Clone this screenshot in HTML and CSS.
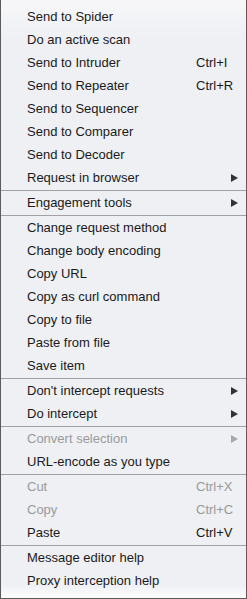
FILE: index.html
```html
<!DOCTYPE html>
<html lang="en">
<head>
    <meta charset="UTF-8">
    <title>Context menu</title>
    <link rel="stylesheet" href="styles.css">
</head>
<body>

<div class="menu">
    <div class="item"><span class="label">Send to Spider</span></div>
    <div class="item"><span class="label">Do an active scan</span></div>
    <div class="item"><span class="label">Send to Intruder</span><span class="key">Ctrl+I</span></div>
    <div class="item"><span class="label">Send to Repeater</span><span class="key">Ctrl+R</span></div>
    <div class="item"><span class="label">Send to Sequencer</span></div>
    <div class="item"><span class="label">Send to Comparer</span></div>
    <div class="item"><span class="label">Send to Decoder</span></div>
    <div class="item"><span class="label">Request in browser</span><span class="arrow"></span></div>
    <div class="sep"></div>
    <div class="item"><span class="label">Engagement tools</span><span class="arrow"></span></div>
    <div class="sep"></div>
    <div class="item"><span class="label">Change request method</span></div>
    <div class="item"><span class="label">Change body encoding</span></div>
    <div class="item"><span class="label">Copy URL</span></div>
    <div class="item"><span class="label">Copy as curl command</span></div>
    <div class="item"><span class="label">Copy to file</span></div>
    <div class="item"><span class="label">Paste from file</span></div>
    <div class="item"><span class="label">Save item</span></div>
    <div class="sep"></div>
    <div class="item"><span class="label">Don't intercept requests</span><span class="arrow"></span></div>
    <div class="item"><span class="label">Do intercept</span><span class="arrow"></span></div>
    <div class="sep"></div>
    <div class="item disabled"><span class="label">Convert selection</span><span class="arrow"></span></div>
    <div class="item"><span class="label">URL-encode as you type</span></div>
    <div class="sep"></div>
    <div class="item disabled"><span class="label">Cut</span><span class="key">Ctrl+X</span></div>
    <div class="item disabled"><span class="label">Copy</span><span class="key">Ctrl+C</span></div>
    <div class="item"><span class="label">Paste</span><span class="key">Ctrl+V</span></div>
    <div class="sep"></div>
    <div class="item"><span class="label">Message editor help</span></div>
    <div class="item"><span class="label">Proxy interception help</span></div>
</div>

</body>
</html>
```

FILE: styles.css
```css
body {
    margin: 0;
    padding: 0;
    background: #ffffff;
    font-family: "Liberation Sans", Arial, sans-serif;
}
.menu {
    box-sizing: border-box;
    width: 247px;
    height: 599px;
    padding-top: 5px;
    border: 1px solid #5b5b5b;
    border-top: none;
    background: linear-gradient(to bottom, #f7f7f9 0px, #eef0f4 40px, #eef0f4 585px, #fbfbfc 596px);
}
.item {
    display: flex;
    align-items: center;
    height: 23px;
    padding-left: 26px;
    padding-right: 8px;
    font-size: 13px;
    line-height: 23px;
    color: #1a1a1a;
}
.item .label {
    flex: 1;
    white-space: nowrap;
}
.item .key {
    width: 42px;
}
.item .arrow {
    width: 0;
    height: 0;
    border-top: 4px solid transparent;
    border-bottom: 4px solid transparent;
    border-left: 7px solid #333333;
}
.disabled {
    color: #9a9a9a;
}
.disabled .arrow {
    border-left-color: #a8a8a8;
}
.sep {
    height: 1px;
    margin-top: 1px;
    background: #a2a2a2;
}
```
